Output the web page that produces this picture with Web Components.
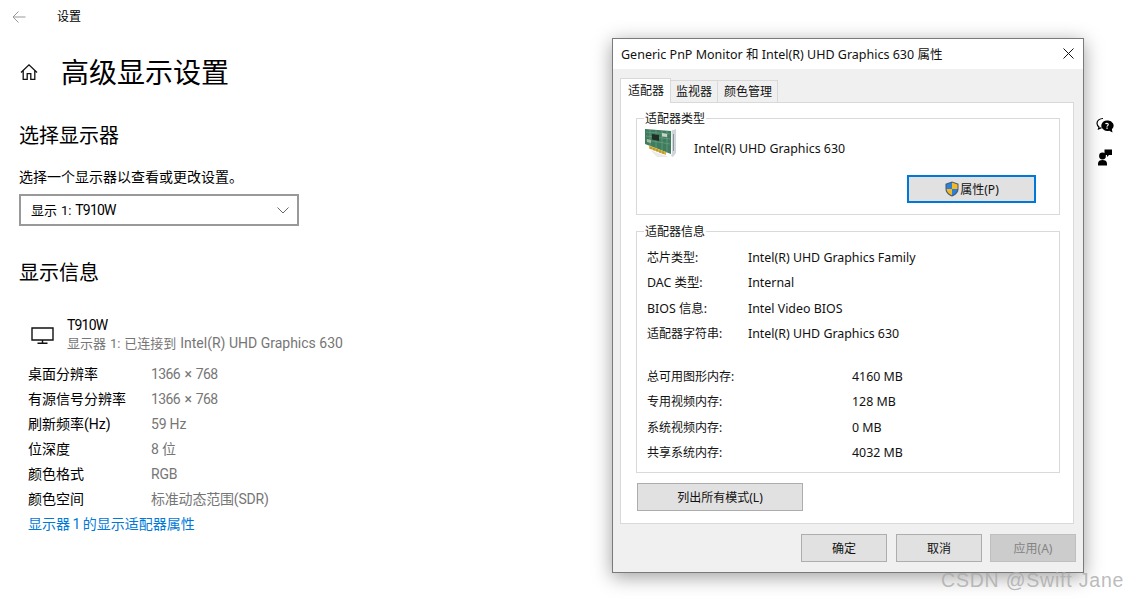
<!DOCTYPE html>
<html lang="zh">
<head>
<meta charset="utf-8">
<title>高级显示设置</title>
<style>
  html, body { margin: 0; height: 600px; overflow: hidden; background: #fff; }
  body { font-family: "Noto Sans", "Noto Sans CJK SC", sans-serif; color: #000; }
</style>
</head>
<body>
<settings-page>
  <info-row numeric label="桌面分辨率">1366 × 768</info-row>
  <info-row numeric label="有源信号分辨率">1366 × 768</info-row>
  <info-row label="刷新频率(Hz)">59 Hz</info-row>
  <info-row label="位深度">8 位</info-row>
  <info-row label="颜色格式">RGB</info-row>
  <info-row label="颜色空间">标准动态范围(SDR)</info-row>
</settings-page>
<help-rail></help-rail>
<props-dialog></props-dialog>
<water-mark>CSDN @Swift Jane</water-mark>

<script>
class SettingsPage extends HTMLElement {
  connectedCallback() {
    this.attachShadow({ mode: 'open' });
    this.shadowRoot.innerHTML = `
      <style>
        :host { display: block; width: 600px; height: 600px; font-family: Roboto, "Noto Sans CJK SC", sans-serif; font-size: 14px; line-height: 20px; }
        .top { display: flex; align-items: center; height: 33px; font-size: 12px; }
        .top svg { margin-left: 12px; }
        .top span { margin-left: 31px; }
        .title { display: flex; align-items: center; height: 40px; margin-top: 19px; padding-left: 20px; }
        .title h1 { margin: 0 0 0 23px; padding-top: 4px; font-size: 28px; font-weight: 400; line-height: 40px; }
        h2 { margin: 0; padding-left: 19px; font-size: 20px; font-weight: 400; line-height: 28px; }
        .first { margin-top: 30px; }
        .hint { margin: 17px 0 0 19px; }
        .select { box-sizing: border-box; display: flex; align-items: center; justify-content: space-between;
          width: 280px; height: 32px; margin: 7px 0 0 19px; padding: 0 8px 0 10px; border: 2px solid #999; }
        .tight { letter-spacing: -.8px; }
        .small { font-size: 13px; word-spacing: .7px; }
        .second { margin-top: 33px; }
        .monitor { display: flex; margin: 29px 0 0 31px; height: 41px; }
        .monitor svg { margin: 11px 13px 0 0; }
        .monitor .sub { color: #767676; }
        .monitor div div { line-height: 18px; }
        .rows { display: block; margin: 5px 0 0 28px; }
        a { display: block; margin-left: 28px; color: #0078d7; line-height: 25px; text-decoration: none; word-spacing: -1px; }
      </style>
      <div class="top">
        <svg width="14" height="14" viewBox="0 0 14 14" fill="none" stroke="#999" stroke-width="1"><path d="M13.5 7H1M6.5 1.5 1 7l5.5 5.5"/></svg>
        <span>设置</span>
      </div>
      <div class="title">
        <svg width="18" height="18" viewBox="0 0 18 18" fill="none" stroke="#111" stroke-width="1.3"><path d="M1 9.5 9 1.8l8 7.7M3.2 7.6V16.4H7.2V10.6H10.8V16.4H14.8V7.6"/></svg>
        <h1>高级显示设置</h1>
      </div>
      <h2 class="first">选择显示器</h2>
      <div class="hint">选择一个显示器以查看或更改设置。</div>
      <div class="select">
        <span><span class="small">显示 1: </span><span class="tight">T910W</span></span>
        <svg width="12" height="7" viewBox="0 0 12 7" fill="none" stroke="#666" stroke-width="1"><path d="M.5.5l5.500 5.500 5.500-5.500"/></svg>
      </div>
      <h2 class="second">显示信息</h2>
      <div class="monitor">
        <svg width="23" height="17" viewBox="0 0 23 17" fill="none" stroke="#111" stroke-width="1.4"><path d="M1 1H22V13H1Z"/><path d="M11.5 13V16M6.5 16.3H16.5"/></svg>
        <div><div class="tight">T910W</div><div class="sub"><span class="small">显示器 1: 已连接到 </span>Intel(R) UHD Graphics 630</div></div>
      </div>
      <div class="rows"><slot></slot></div>
      <a href="#">显示器 1 的显示适配器属性</a>
    `;
  }
}
customElements.define('settings-page', SettingsPage);

class InfoRow extends HTMLElement {
  connectedCallback() {
    this.attachShadow({ mode: 'open' });
    this.shadowRoot.innerHTML = `
      <style>
        :host { display: grid; grid-template-columns: 123px auto; line-height: 25px; }
        .value { color: #767676; letter-spacing: -.2px; }
        :host([numeric]) .value { letter-spacing: -.6px; word-spacing: 1.5px; }
      </style>
      <span>${this.getAttribute('label')}</span>
      <span class="value"><slot></slot></span>
    `;
  }
}
customElements.define('info-row', InfoRow);

class HelpRail extends HTMLElement {
  connectedCallback() {
    this.attachShadow({ mode: 'open' });
    this.shadowRoot.innerHTML = `
      <style>
        :host { position: absolute; left: 1096px; top: 117px; display: flex; flex-direction: column; gap: 13px; }
        svg { display: block; }
      </style>
      <svg width="18" height="18" viewBox="0 0 18 18">
        <path d="M7 1.5C3.6 1.5 1 3.6 1 6.3c0 1.5.8 2.8 2 3.6L2.5 12l3-1.4" fill="none" stroke="#000" stroke-width="1.2"/>
        <path d="M11 3.5a5.7 5.2 0 0 0-3 9.6c1.500 1 3.500 1.300 5.200.6L16.500 15.500l-.6-3.200A5.500 5.200 0 0 0 11 3.500Z" fill="#000"/>
        <path d="M9.600 7.200c.2-1 2.600-1.300 2.700.3 0 1.100-1.300 1.200-1.300 2.200" fill="none" stroke="#fff" stroke-width="1.100"/>
        <rect x="10.400" y="10.500" width="1.300" height="1.300" fill="#fff"/>
      </svg>
      <svg width="18" height="18" viewBox="0 0 18 18">
        <circle cx="6.500" cy="8" r="3.400" fill="#000"/>
        <path d="M2 17.500v-2C2 13 4 12 6.500 12s4.500 1 4.500 3.500v2Z" fill="#000"/>
        <path d="M8.500 1.500h7.500v5.500h-3l-2 2V7H8.500Z" fill="#000"/>
      </svg>
    `;
  }
}
customElements.define('help-rail', HelpRail);

class GroupBox extends HTMLElement {
  connectedCallback() {
    this.attachShadow({ mode: 'open' });
    this.shadowRoot.innerHTML = `
      <style>
        :host { display: block; position: relative; box-sizing: border-box; border: 1px solid #d9d9d9; }
        .legend { position: absolute; left: 7px; top: -8px; padding: 0 1px; background: #fff; line-height: 16px; }
      </style>
      <span class="legend">${this.getAttribute('label')}</span>
      <slot></slot>
    `;
  }
}
customElements.define('group-box', GroupBox);

class WinButton extends HTMLElement {
  connectedCallback() {
    this.attachShadow({ mode: 'open' });
    this.shadowRoot.innerHTML = `
      <style>
        :host { display: flex; align-items: center; justify-content: center; box-sizing: border-box;
          height: 28px; background: #e1e1e1; border: 1px solid #adadad; }
        :host([primary]) { background: #e1e1e1; border: 2px solid #0078d7; }
        :host([disabled]) { background: #ccc; border-color: #bfbfbf; color: #838383; }
      </style>
      <slot></slot>
    `;
  }
}
customElements.define('win-button', WinButton);

class KvRow extends HTMLElement {
  connectedCallback() {
    this.attachShadow({ mode: 'open' });
    this.shadowRoot.innerHTML = `
      <style>
        :host { display: grid; grid-template-columns: var(--key-width, 101px) auto; height: 25.3px; line-height: 25.3px; }
        :host([latin]) .key, .val { font-size: 12.4px; }
      </style>
      <span class="key">${this.getAttribute('label')}</span>
      <span class="val"><slot></slot></span>
    `;
  }
}
customElements.define('kv-row', KvRow);

class PropsDialog extends HTMLElement {
  connectedCallback() {
    this.attachShadow({ mode: 'open' });
    this.shadowRoot.innerHTML = `
      <style>
        :host { position: absolute; left: 612px; top: 38px; box-sizing: border-box; width: 472px; height: 535px;
          display: flex; flex-direction: column; background: #f0f0f0; border: 1px solid #7a7a7a;
          box-shadow: 0 4px 18px rgba(0,0,0,.38); font-size: 12px; color: #111; }
        .titlebar { box-sizing: border-box; display: flex; align-items: center; justify-content: space-between; height: 30px; flex: none;
          padding: 0 9px 2px 8px; background: #fff; font-size: 12.5px; }
        .tabs { display: flex; align-items: flex-end; height: 24px; margin: 9px 0 0 7px; flex: none; position: relative; z-index: 1; }
        .tab { box-sizing: border-box; height: 22px; line-height: 21px; padding: 0 5px; border: 1px solid #d9d9d9; border-bottom: 0; margin-left: -1px; background: #f0f0f0; white-space: nowrap; }
        .tab.on { width: 51px; height: 25px; margin: 0 0 -1px 0; padding: 0 0 0 7px; line-height: 23px; background: #fff; }
        .tab.last { padding-left: 6px; }
        .panel { box-sizing: border-box; height: 422px; margin: 0 9px 0 7px; padding: 15px 13px 0 15px; background: #fff; border: 1px solid #d9d9d9; }
        .adapter { height: 97px; }
        .card { display: flex; align-items: flex-start; gap: 17px; padding: 10px 0 0 8px; height: 22px; }
        .card span { margin-top: 11px; font-size: 12.4px; }
        .prop { width: 129px; margin: 24px 0 0 270px; padding-bottom: 1px; }
        .prop svg { display: block; }
        .info { height: 242px; margin-top: 16px; padding: 13px 0 0 10px; }
        .spacer { height: 18px; }
        .mem { --key-width: 205px; }
        .list { width: 166px; margin: 10px 0 0 1px; }
        .actions { display: flex; justify-content: flex-end; gap: 8px; margin: 10px 7px 0 0; }
        .actions win-button { width: 86px; }
        .actions win-button:first-child { margin-right: 1px; }
      </style>
      <div class="titlebar">
        <span>Generic PnP Monitor 和 Intel(R) UHD Graphics 630 属性</span>
        <svg width="11" height="11" viewBox="0 0 11 11" stroke="#111" stroke-width="1"><path d="M.5.5l10 10M10.500.5l-10 10"/></svg>
      </div>
      <div class="tabs">
        <div class="tab on">适配器</div>
        <div class="tab">监视器</div>
        <div class="tab last">颜色管理</div>
      </div>
      <div class="panel">
        <group-box class="adapter" label="适配器类型">
          <div class="card">
            <svg width="32" height="30" viewBox="0 0 32 30" style="flex:none;overflow:visible">
              <path d="M0 0 26 2V25L0 15Z" fill="#3f7b5f"/>
              <path d="M1 3 25 5M1 7 25 10M1 11 25 15M5 1V17M11 1V19M17 2V22M22 2V24" stroke="#86b596" stroke-width=".7" opacity=".65"/>
              <path d="M7 5 14 6V12L7 10.500Z" fill="#1f2f27"/>
              <path d="M17 4 22 5V8L17 7.500Z" fill="#c8d4c8"/>
              <path d="M2 10 6 11V14L2 13Z" fill="#a8b8a0"/>
              <path d="M4 16.500 21 23V26L4 19.500Z" fill="#d6b23a"/>
              <path d="M6 18V20M9 19V21.500M12 20V22.500M15 21.500V24M18 22.500V25" stroke="#8b7420" stroke-width=".7"/>
              <path d="M26.500 1.500 31 0V24L28 28 26 27 27 24Z" fill="#cfd5da"/>
              <path d="M28.500 5V22" stroke="#8c959c" stroke-width="1"/>
              <path d="M5 21 24 28H12Z" fill="#000" opacity=".08"/>
            </svg>
            <span>Intel(R) UHD Graphics 630</span>
          </div>
          <win-button class="prop" primary>
            <svg width="16" height="16" viewBox="0 0 16 16">
              <path d="M8 .5 1.500 2.800V8c0 3.600 2.800 6 6.500 7.500 3.700-1.500 6.500-3.900 6.500-7.500V2.800Z" fill="#3d5a7a"/>
              <path d="M8 1.600V8H2.500V3.500Z" fill="#2f7fd6"/>
              <path d="M8 1.600V8h5.500V3.500Z" fill="#f5b81f"/>
              <path d="M8 8H2.500c.1 2.900 2.400 4.900 5.500 6.300Z" fill="#f5b81f"/>
              <path d="M8 8h5.500c-.1 2.900-2.400 4.900-5.500 6.300Z" fill="#2f7fd6"/>
            </svg>
            <span>属性(P)</span>
          </win-button>
        </group-box>
        <group-box class="info" label="适配器信息">
          <kv-row label="芯片类型:">Intel(R) UHD Graphics Family</kv-row>
          <kv-row latin label="DAC 类型:">Internal</kv-row>
          <kv-row latin label="BIOS 信息:">Intel Video BIOS</kv-row>
          <kv-row label="适配器字符串:">Intel(R) UHD Graphics 630</kv-row>
          <div class="spacer"></div>
          <kv-row class="mem" label="总可用图形内存:">4160 MB</kv-row>
          <kv-row class="mem" label="专用视频内存:">128 MB</kv-row>
          <kv-row class="mem" label="系统视频内存:">0 MB</kv-row>
          <kv-row class="mem" label="共享系统内存:">4032 MB</kv-row>
        </group-box>
        <win-button class="list">列出所有模式(L)</win-button>
      </div>
      <div class="actions">
        <win-button>确定</win-button>
        <win-button>取消</win-button>
        <win-button disabled>应用(A)</win-button>
      </div>
    `;
  }
}
customElements.define('props-dialog', PropsDialog);

class WaterMark extends HTMLElement {
  connectedCallback() {
    this.attachShadow({ mode: 'open' });
    this.shadowRoot.innerHTML = `
      <style>
        :host { position: absolute; left: 941px; top: 566px; font: 19.5px/28px "Liberation Sans", sans-serif;
          letter-spacing: .8px; color: rgba(170,170,170,.8); white-space: nowrap; }
      </style>
      <slot></slot>
    `;
  }
}
customElements.define('water-mark', WaterMark);
</script>
</body>
</html>
